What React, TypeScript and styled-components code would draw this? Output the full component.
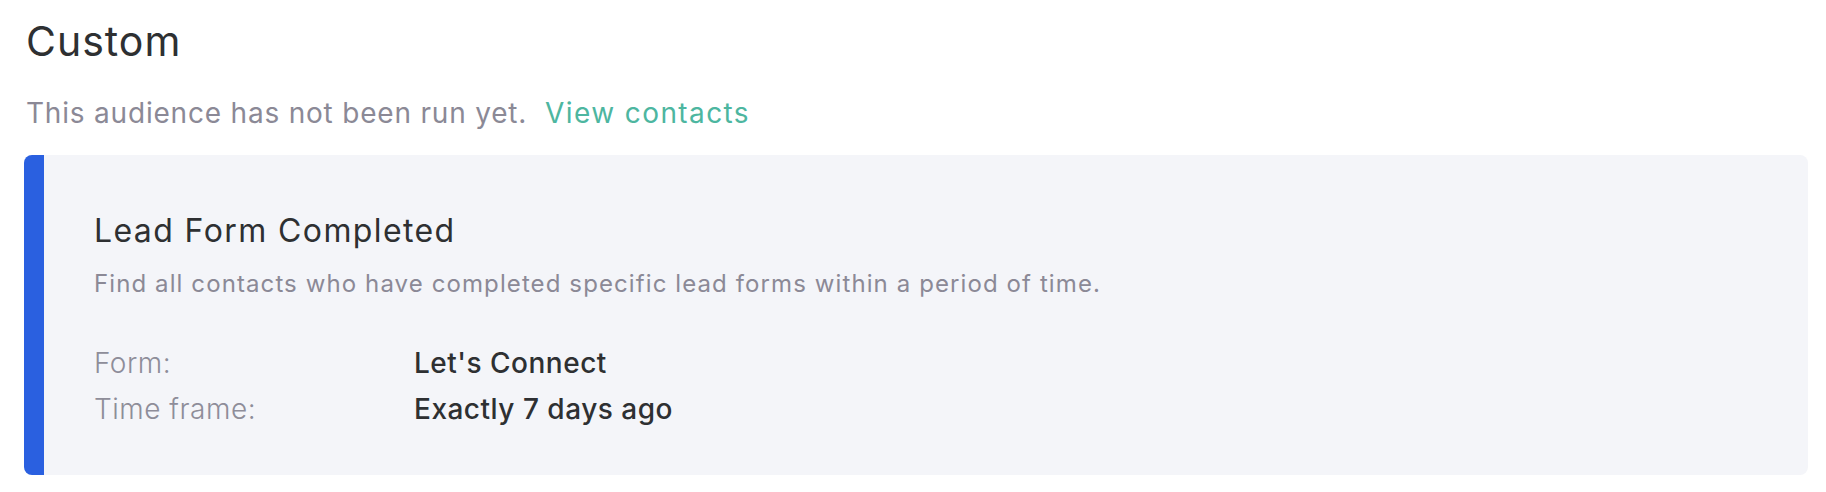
import styled, { createGlobalStyle } from "styled-components";

const GlobalStyle = createGlobalStyle`
  html, body {
    margin: 0;
    padding: 0;
    background: #ffffff;
  }
  body {
    font-family: Inter, Lato, "Liberation Sans", sans-serif;
    -webkit-font-smoothing: antialiased;
  }
`;

const Page = styled.div`
  padding: 18px 18px 0 24px;
  display: flex;
  flex-direction: column;
`;

const Heading = styled.h1`
  margin: 0 0 0 2px;
  font-size: 41px;
  line-height: 46px;
  font-weight: 400;
  color: #2e3032;
  letter-spacing: 1px;
`;

const Status = styled.p`
  margin: 31px 0 0 2px;
  font-size: 28px;
  line-height: 36px;
  color: #8b8996;
  letter-spacing: 0.8px;
`;

const Link = styled.a`
  margin-left: 18px;
  color: #4db6a0;
  text-decoration: none;
  letter-spacing: 1.4px;
  cursor: pointer;
`;

const Card = styled.section`
  margin-top: 24px;
  height: 320px;
  box-sizing: border-box;
  display: flex;
  background: #f4f5f9;
  border-radius: 8px;
  overflow: hidden;
`;

const Accent = styled.div`
  width: 20px;
  flex: none;
  background: #2a60e0;
`;

const CardBody = styled.div`
  flex: 1;
  padding: 56px 0 0 50px;
  display: flex;
  flex-direction: column;
`;

const CardTitle = styled.h2`
  margin: 0;
  font-size: 32px;
  line-height: 40px;
  font-weight: 400;
  color: #2e3032;
  letter-spacing: 1.4px;
`;

const CardText = styled.p`
  margin: 18px 0 0;
  font-size: 24px;
  line-height: 30px;
  color: #8b8996;
  letter-spacing: 1.1px;
`;

const Details = styled.dl`
  margin: 46px 0 0;
  display: grid;
  grid-template-columns: 320px 1fr;
  row-gap: 10px;
  font-size: 28px;
  line-height: 36px;
  letter-spacing: 0.5px;
`;

const Label = styled.dt`
  margin: 0;
  color: #8e8d99;
  font-weight: 300;
`;

const Value = styled.dd`
  margin: 0;
  color: #2e3032;
  font-weight: 500;
`;

const rows = [
  { label: "Form:", value: "Let's Connect" },
  { label: "Time frame:", value: "Exactly 7 days ago" },
];

export default function App() {
  return (
    <>
      <GlobalStyle />
      <Page>
        <Heading>Custom</Heading>
        <Status>
          This audience has not been run yet.
          <Link>View contacts</Link>
        </Status>
        <Card>
          <Accent />
          <CardBody>
            <CardTitle>Lead Form Completed</CardTitle>
            <CardText>
              Find all contacts who have completed specific lead forms within a
              period of time.
            </CardText>
            <Details>
              {rows.map((r) => (
                <>
                  <Label key={r.label + "-l"}>{r.label}</Label>
                  <Value key={r.label + "-v"}>{r.value}</Value>
                </>
              ))}
            </Details>
          </CardBody>
        </Card>
      </Page>
    </>
  );
}
